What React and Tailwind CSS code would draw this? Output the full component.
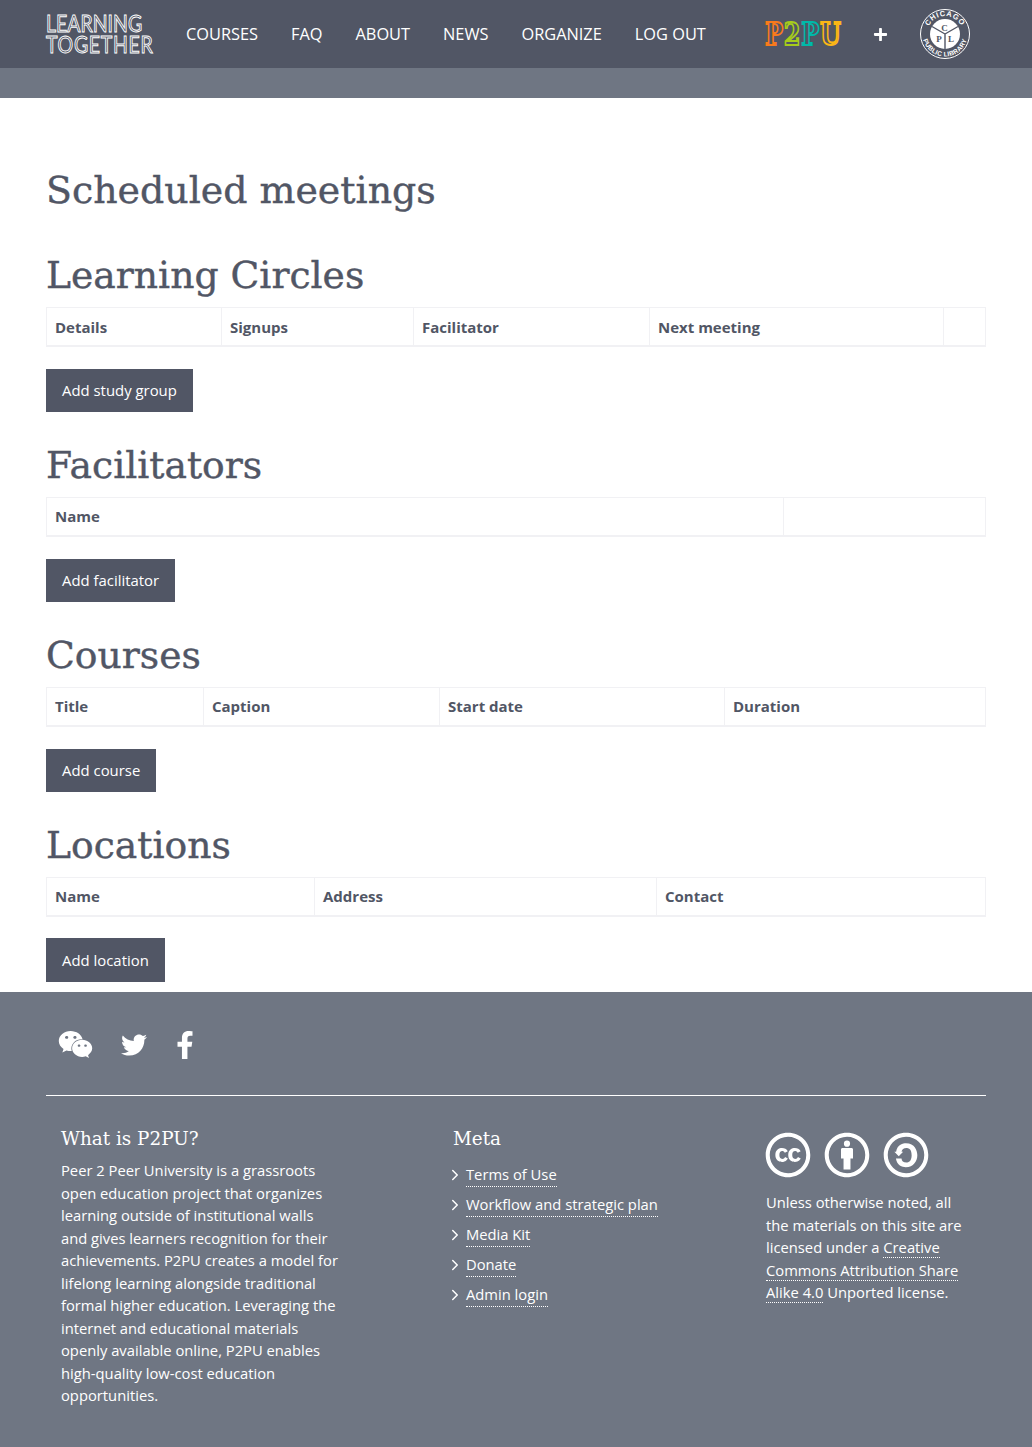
import React from 'react';
import { FaWeixin, FaTwitter, FaFacebookF, FaPlus, FaCreativeCommons, FaCreativeCommonsBy, FaCreativeCommonsSa } from 'react-icons/fa';
import { ChevronRight } from 'lucide-react';

const NAV = ['COURSES', 'FAQ', 'ABOUT', 'NEWS', 'ORGANIZE', 'LOG OUT'];

const SECTIONS = [
    { title: 'Learning Circles', button: 'Add study group', cols: [['Details', 'w-[175px]'], ['Signups', 'w-[192px]'], ['Facilitator', 'w-[236px]'], ['Next meeting', 'w-[294px]'], ['', 'w-[41px]']] },
    { title: 'Facilitators', button: 'Add facilitator', cols: [['Name', 'w-[737px]'], ['', 'w-[201px]']] },
    { title: 'Courses', button: 'Add course', cols: [['Title', 'w-[157px]'], ['Caption', 'w-[236px]'], ['Start date', 'w-[285px]'], ['Duration', 'w-[260px]']] },
    { title: 'Locations', button: 'Add location', cols: [['Name', 'w-[268px]'], ['Address', 'w-[342px]'], ['Contact', 'w-[328px]']] },
];

const META = ['Terms of Use', 'Workflow and strategic plan', 'Media Kit', 'Donate', 'Admin login'];

const FooterLink = ({ children }) => (
    <a className="border-b border-dotted border-white text-white">{children}</a>
);

const P2puLogo = () => (
    <div className="flex w-[76px] scale-y-[1.35] justify-between font-['DejaVu_Serif',serif] text-[24px] leading-none font-bold text-transparent">
        <span className="[-webkit-text-stroke:1.5px_#f97a1b]">P</span>
        <span className="[-webkit-text-stroke:1.5px_#a6cc1a]">2</span>
        <span className="[-webkit-text-stroke:1.5px_#00b9a9]">P</span>
        <span className="[-webkit-text-stroke:1.5px_#fbb615]">U</span>
    </div>
);

const LibrarySeal = () => (
    <svg width="50" height="50" viewBox="0 0 50 50" className="shrink-0">
        <defs>
            <path id="sealTop" d="M 7 25 A 18 18 0 0 1 43 25" />
            <path id="sealBottom" d="M 2.5 25 A 22.5 22.5 0 0 0 47.5 25" />
        </defs>
        <circle cx="25" cy="25" r="24.5" fill="#515665" stroke="#fff" />
        <text fontFamily="'Liberation Sans', sans-serif" fontSize="7.5" fontWeight="700" fill="#fff" letterSpacing="0.7">
            <textPath href="#sealTop" startOffset="50%" textAnchor="middle">CHICAGO</textPath>
        </text>
        <text fontFamily="'Liberation Sans', sans-serif" fontSize="6.5" fontWeight="700" fill="#fff" letterSpacing="0.3">
            <textPath href="#sealBottom" startOffset="50%" textAnchor="middle">PUBLIC LIBRARY</textPath>
        </text>
        <circle cx="25" cy="25" r="15" fill="#fff" />
        <path d="M25 25 L25 40 M25 25 L12 17.5 M25 25 L38 17.5" stroke="#515665" strokeWidth="1.4" fill="none" />
        <g fontFamily="'Liberation Serif', serif" fontSize="9" fontWeight="700" fill="#515665" textAnchor="middle">
            <text x="24.5" y="22">C</text>
            <text x="19" y="33">P</text>
            <text x="31" y="33">L</text>
        </g>
    </svg>
);

const Section = ({ title, button, cols }) => (
    <section>
        <h2 className="mt-[32.75px] mb-3 h-10 font-['DejaVu_Serif',serif] text-[37.7px] leading-10 text-[#515665] [-webkit-text-stroke:0.4px_#515665]">{title}</h2>
        <table className="w-full table-fixed border-separate border-spacing-0 border border-b-2 border-[#f1f1f4]">
            <thead>
                <tr className="h-[37px]">
                    {cols.map(([label, width], i) => (
                        <th key={i} className={`${width} border-r border-[#f1f1f4] px-[8px] text-left text-[15px] font-bold text-[#515665] last:border-r-0`}>{label}</th>
                    ))}
                </tr>
            </thead>
        </table>
        <button className="mt-[21.75px] flex h-[43.25px] items-center bg-[#515665] px-4 text-[14.9px] text-white">{button}</button>
    </section>
);

export default function App() {
    return (
        <div className="min-h-screen bg-white font-['Open_Sans',sans-serif]">
            <header className="flex h-[68px] items-center bg-[#515665] pl-[46px] text-white">
                <div className="w-[140px] origin-left scale-y-[1.2] font-['Lato',sans-serif] text-[19.5px] leading-[18.3px] text-transparent [-webkit-text-stroke:0.8px_#fff]">
                    <div>LEARNING</div>
                    <div className="tracking-[0.7px]">TOGETHER</div>
                </div>
                <nav className="flex w-[579px] gap-[33px] text-[16.35px]">
                    {NAV.map((item) => <a key={item}>{item}</a>)}
                </nav>
                <P2puLogo />
                <FaPlus className="ml-[32px] text-[15px] text-white" />
                <div className="ml-[32px]"><LibrarySeal /></div>
            </header>
            <div className="h-[30px] bg-[#6f7683]" />

            <main className="px-[46px] pt-[68px]">
                <h1 className="mb-[41.25px] h-12 font-['DejaVu_Serif',serif] text-[37.9px] leading-[48px] text-[#515665] [-webkit-text-stroke:0.4px_#515665]">Scheduled meetings</h1>
                {SECTIONS.map((s) => <Section key={s.title} {...s} />)}
            </main>

            <footer className="mt-[10.75px] h-[455px] bg-[#6f7683] px-[46px] text-[14.75px] leading-[22.5px] text-white">
                <div className="flex h-[104px] items-center gap-[28px] border-b border-white pt-[2px] pl-[12px]">
                    <FaWeixin className="text-[35px]" />
                    <FaTwitter className="text-[26px]" />
                    <FaFacebookF className="-ml-[4px] text-[28px]" />
                </div>
                <div className="flex pt-[31px]">
                    <div className="ml-[15px] w-[392px]">
                        <h3 className="mb-[8px] h-6 font-['DejaVu_Serif',serif] text-[18.4px] leading-6">What is P2PU?</h3>
                        <p className="w-[280px]">Peer 2 Peer University is a grassroots open education project that organizes learning outside of institutional walls and gives learners recognition for their achievements. P2PU creates a model for lifelong learning alongside traditional formal higher education. Leveraging the internet and educational materials openly available online, P2PU enables high-quality low-cost education opportunities.</p>
                    </div>
                    <div className="w-[313px]">
                        <h3 className="mb-[12px] h-6 font-['DejaVu_Serif',serif] text-[18.4px] leading-6">Meta</h3>
                        <ul className="flex flex-col gap-[6.5px]">
                            {META.map((item) => (
                                <li key={item} className="flex items-center">
                                    <ChevronRight size={18} strokeWidth={2} className="-ml-[7px] mr-[2px] text-white" />
                                    <FooterLink>{item}</FooterLink>
                                </li>
                            ))}
                        </ul>
                    </div>
                    <div className="w-[200px]">
                        <div className="mt-[5px] mb-[13px] -ml-[1px] flex gap-[13px] text-[46px]">
                            <FaCreativeCommons />
                            <FaCreativeCommonsBy />
                            <FaCreativeCommonsSa />
                        </div>
                        <p>Unless otherwise noted, all the materials on this site are licensed under a <FooterLink>Creative Commons Attribution Share Alike 4.0</FooterLink> Unported license.</p>
                    </div>
                </div>
            </footer>
        </div>
    );
}
